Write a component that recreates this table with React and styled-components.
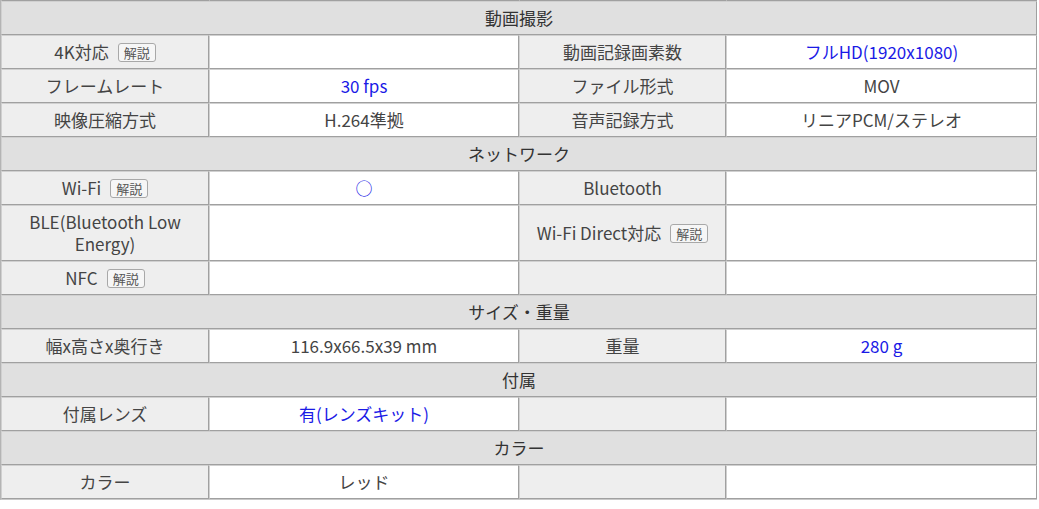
import React from "react";
import styled, { createGlobalStyle } from "styled-components";

const Global = createGlobalStyle`
  html, body { margin: 0; padding: 0; background: #ffffff; }
  body { font-family: "Noto Sans CJK JP", "Noto Sans", sans-serif; }
`;

const Table = styled.table`
  width: 1036px;
  table-layout: fixed;
  border-collapse: separate;
  border-spacing: 0;
  border-left: 1px solid #b4b4b4;
  border-bottom: 1px solid #c8c8c8;
  font-size: 17px;
  line-height: 22px;
  color: #444;
`;

const Cell = styled.td`
  border-right: 1px solid #a0a0a0;
  border-bottom: 1px solid #a0a0a0;
  border-top: 1px solid #d0d0d0;
  border-left: 1px solid #d0d0d0;
  padding: 5px 6px;
  height: 22px;
  text-align: center;
  vertical-align: middle;
  background: ${(p) => (p.$label ? "#eeeeee" : "#ffffff")};
  color: ${(p) => (p.$link ? "#1a1ae6" : "#444")};
`;

const StubCell = styled.td`
  border-right: 1px solid #a0a0a0;
  border-bottom: 1px solid #a0a0a0;
  border-left: 1px solid #d0d0d0;
  padding: 0;
  height: 0;
  line-height: 0;
  font-size: 0;
  background: #ffffff;
`;

const SectionCell = styled.th`
  border-right: 1px solid #a0a0a0;
  border-bottom: 1px solid #a0a0a0;
  border-top: 1px solid #d0d0d0;
  border-left: 1px solid #d0d0d0;
  padding: 5px 6px;
  height: 22px;
  background: #e0e0e0;
  font-weight: normal;
  color: #333;
  text-align: center;
`;

const Badge = styled.span`
  display: inline-block;
  margin-left: 9px;
  padding: 0 5px;
  height: 17px;
  line-height: 17px;
  font-size: 13px;
  color: #555;
  background: #f6f6f6;
  border: 1px solid #a8a8a8;
  border-radius: 3px;
  vertical-align: 1px;
`;

const sections = [
  {
    title: "動画撮影",
    rows: [
      [{ t: "4K対応", b: true }, { t: "" }, { t: "動画記録画素数" }, { t: "フルHD(1920x1080)", l: true }],
      [{ t: "フレームレート" }, { t: "30 fps", l: true }, { t: "ファイル形式" }, { t: "MOV" }],
      [{ t: "映像圧縮方式" }, { t: "H.264準拠" }, { t: "音声記録方式" }, { t: "リニアPCM/ステレオ" }],
    ],
  },
  {
    title: "ネットワーク",
    rows: [
      [{ t: "Wi-Fi", b: true }, { t: "○", l: true }, { t: "Bluetooth" }, { t: "" }],
      [{ t: "BLE(Bluetooth Low Energy)" }, { t: "" }, { t: "Wi-Fi Direct対応", b: true }, { t: "" }],
      [{ t: "NFC", b: true }, { t: "" }, { t: "" }, { t: "" }],
    ],
  },
  {
    title: "サイズ・重量",
    rows: [[{ t: "幅x高さx奥行き" }, { t: "116.9x66.5x39 mm" }, { t: "重量" }, { t: "280 g", l: true }]],
  },
  {
    title: "付属",
    rows: [[{ t: "付属レンズ" }, { t: "有(レンズキット)", l: true }, { t: "" }, { t: "" }]],
  },
  {
    title: "カラー",
    rows: [[{ t: "カラー" }, { t: "レッド" }, { t: "" }, { t: "" }]],
  },
];

export default function App() {
  return (
    <>
      <Global />
      <Table>
        <colgroup>
          <col style={{ width: 208 }} />
          <col style={{ width: 310 }} />
          <col style={{ width: 207 }} />
          <col style={{ width: 311 }} />
        </colgroup>
        <tbody>
          <tr>
            <StubCell />
            <StubCell />
            <StubCell />
            <StubCell />
          </tr>
          {sections.map((s) => (
            <React.Fragment key={s.title}>
              <tr>
                <SectionCell colSpan={4}>{s.title}</SectionCell>
              </tr>
              {s.rows.map((r, i) => (
                <tr key={i}>
                  {r.map((c, j) => (
                    <Cell key={j} $label={j % 2 === 0} $link={c.l}>
                      {c.t}
                      {c.b && <Badge>解説</Badge>}
                    </Cell>
                  ))}
                </tr>
              ))}
            </React.Fragment>
          ))}
        </tbody>
      </Table>
    </>
  );
}
